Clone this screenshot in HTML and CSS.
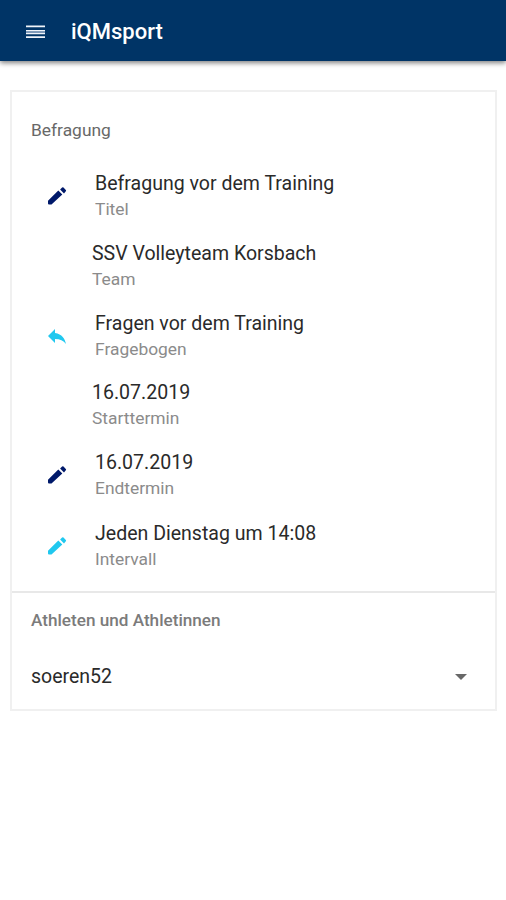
FILE: index.html
```html
<!DOCTYPE html>
<html lang="de">
<head>
<meta charset="utf-8">
<title>iQMsport</title>
<link rel="stylesheet" href="styles.css">
</head>
<body>
<header class="bar">
  <svg class="menu" viewBox="0 0 20 14"><path d="M0 0.500h19v1.700H0zM0 5h19v1.500H0zM0 7.800h19v1.500H0zM0 11.300h19v1.700H0z"/><path class="dim" d="M0 6.500h19v1.300H0z"/></svg>
  <h1>iQMsport</h1>
</header>
<main class="card">
  <section class="survey">
    <h2 class="light">Befragung</h2>
    <ul class="list">
      <li class="item"><svg class="icon navy" viewBox="0 0 24 24"><path d="M3 18v1.500a1 1 0 0 0 1 1h2.500L17.300 10.500l-4-4L3 16.800zM20.800 7.300a1 1 0 0 0 0-1.400l-2.300-2.300a1 1 0 0 0-1.400 0l-2 1.900 3.900 3.900 1.800-2.100z"/></svg><div><p class="value">Befragung vor dem Training</p><p class="label">Titel</p></div></li>
      <li class="item plain"><div><p class="value">SSV Volleyteam Korsbach</p><p class="label">Team</p></div></li>
      <li class="item"><svg class="icon cyan" viewBox="0 0 24 24"><path d="M10 9V5l-7 7 7 7v-4.100c5 0 8.500 1.600 11 5.100-1-5-4-10-11-11z"/></svg><div><p class="value">Fragen vor dem Training</p><p class="label">Fragebogen</p></div></li>
      <li class="item plain"><div><p class="value">16.07.2019</p><p class="label">Starttermin</p></div></li>
      <li class="item"><svg class="icon navy" viewBox="0 0 24 24"><path d="M3 18v1.500a1 1 0 0 0 1 1h2.500L17.300 10.500l-4-4L3 16.800zM20.800 7.300a1 1 0 0 0 0-1.400l-2.300-2.300a1 1 0 0 0-1.400 0l-2 1.900 3.900 3.900 1.800-2.100z"/></svg><div><p class="value">16.07.2019</p><p class="label">Endtermin</p></div></li>
      <li class="item last"><svg class="icon cyan" viewBox="0 0 24 24"><path d="M3 18v1.500a1 1 0 0 0 1 1h2.500L17.300 10.500l-4-4L3 16.800zM20.800 7.300a1 1 0 0 0 0-1.400l-2.300-2.300a1 1 0 0 0-1.400 0l-2 1.900 3.900 3.900 1.800-2.100z"/></svg><div><p class="value">Jeden Dienstag um 14:08</p><p class="label">Intervall</p></div></li>
    </ul>
  </section>
  <section class="athletes">
    <h2>Athleten und Athletinnen</h2>
    <div class="select"><span>soeren52</span><svg class="caret" viewBox="0 0 12 6"><path d="M0 0h12L6 6z"/></svg></div>
  </section>
</main>
</body>
</html>
```

FILE: styles.css
```css
* { box-sizing: border-box; }
body { margin: 0; background: #fff; font-family: Roboto, sans-serif; color: #2a2a2a; }
h1, h2, p, ul { margin: 0; padding: 0; }
.bar { height: 61px; background: #003466; display: flex; align-items: center; padding-left: 26px; gap: 25px; box-shadow: 0 2px 5px rgba(0, 0, 0, .5); }
.menu { width: 20px; height: 14px; margin-top: 2px; fill: #f0f4fa; }
.dim { fill: #8ea6c4; }
h1 { font-size: 22px; line-height: 28px; font-weight: 500; color: #fff; padding-top: 2px; }
.card { margin: 29px 9px 0 10px; height: 621px; border: 2px solid #f0f0f0; }
.survey { height: 501px; padding-top: 28px; border-bottom: 2px solid #e8e8e8; }
h2 { font-size: 17.150px; line-height: 20px; font-weight: 500; color: #7b7b7b; padding-left: 19px; }
.light { font-weight: 400; font-size: 17.400px; color: #686868; }
.list { list-style: none; padding-top: 30px; }
.item { height: 69.800px; padding-left: 33px; display: flex; gap: 26px; }
.last { padding-top: 1px; }
.plain { padding-left: 80px; }
.icon { width: 24px; height: 24px; margin-top: 14px; flex: none; }
.navy { fill: #00196a; }
.cyan { fill: #20c8ef; }
.value { padding-top: 1px; font-size: 19.550px; line-height: 26px; white-space: nowrap; }
.label { margin-top: -1px; font-size: 17.400px; line-height: 26px; color: #8b8b8b; }
.athletes { padding-top: 17px; }
.select { display: flex; justify-content: space-between; align-items: center; padding: 33px 28px 0 19px; font-size: 19.500px; line-height: 26px; }
.select span { padding-top: 1px; }
.caret { width: 12px; height: 6px; fill: #686868; }
```
